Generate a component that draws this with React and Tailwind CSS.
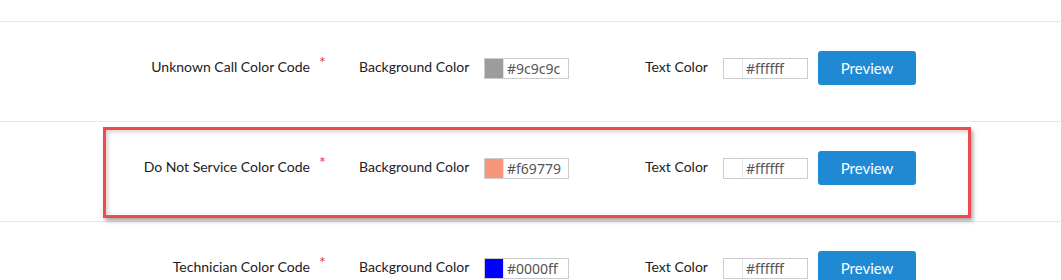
import React from "react";

const rows = [
  { label: "Unknown Call Color Code", bg: "#9c9c9c", text: "#ffffff" },
  { label: "Do Not Service Color Code", bg: "#f69779", text: "#ffffff", marked: true },
  { label: "Technician Color Code", bg: "#0000ff", text: "#ffffff" },
];

const ColorField = ({ value }) => (
  <div className="flex h-[21px] w-[85px] items-stretch border border-[#cccccc] bg-white">
    <div className="w-[19px] border-r border-[#e3e3e3]" style={{ backgroundColor: value }} />
    <span
      className="pl-[3px] text-[14px] leading-[19px] text-[#555555]"
      style={{ fontFamily: '"Noto Sans", "Open Sans", sans-serif' }}
    >
      {value}
    </span>
  </div>
);

const ColorRow = ({ row }) => (
  <div className="relative h-[100px] border-b border-[#e8e8e8] pt-[29px]">
    <div className="flex h-[34px] items-center">
      <div className="w-[310px] mb-[3px] text-right">{row.label}</div>
      <div className="w-[49px] pl-[9px] mb-[12px] text-[16px] leading-none text-[#e53935]">*</div>
      <div className="w-[125px] mb-[3px]">Background Color</div>
      <ColorField value={row.bg} />
      <div className="ml-[76px] mb-[3px] w-[78px]">Text Color</div>
      <ColorField value={row.text} />
      <button className="ml-[10px] h-[34px] w-[98px] rounded-[3px] bg-[#1f8ad3] text-[15px] text-white">
        Preview
      </button>
    </div>
    {row.marked && (
      <div className="pointer-events-none absolute left-[103px] top-[5px] h-[91px] w-[868px] border-[3px] border-[#f24a4c] shadow-[2px_3px_4px_rgba(0,0,0,0.35),inset_2px_2px_4px_rgba(0,0,0,0.18)]" />
    )}
  </div>
);

export default function App() {
  return (
    <div
      className="h-[280px] w-[1061px] overflow-hidden bg-white text-[14px] text-[#222222]"
      style={{ fontFamily: "Lato, sans-serif" }}
    >
      <div className="h-[22px] border-b border-[#e8e8e8]" />
      {rows.map((row) => (
        <ColorRow key={row.label} row={row} />
      ))}
    </div>
  );
}
